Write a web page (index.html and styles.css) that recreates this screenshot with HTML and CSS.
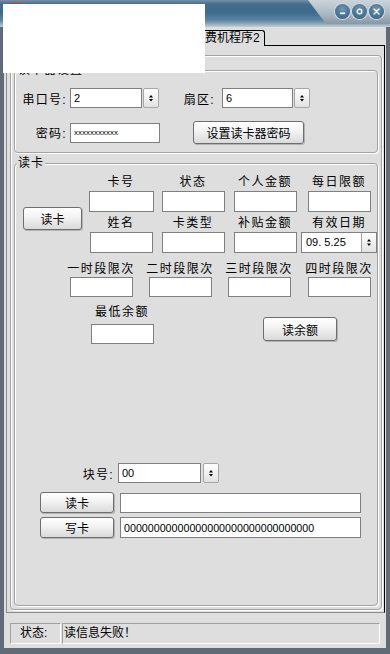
FILE: index.html
```html
<!DOCTYPE html>
<html lang="zh-CN">
<head>
    <meta charset="UTF-8">
    <meta name="viewport" content="width=device-width, initial-scale=1.0">
    <title>消费机程序</title>
    <link rel="stylesheet" href="styles.css">
</head>
<body>
    <div class="window">
        <!-- Title bar -->
        <div class="titlebar">
            <span class="app-icon"></span>
            <div class="title-buttons">
                <span class="tb-btn">
                    <svg width="15" height="15" viewBox="0 0 15 15"><rect x="5" y="8.5" width="5" height="1.6" fill="#fff"/></svg>
                </span>
                <span class="tb-btn">
                    <svg width="15" height="15" viewBox="0 0 15 15"><circle cx="7.5" cy="7.5" r="2.3" fill="none" stroke="#fff" stroke-width="1.3"/></svg>
                </span>
                <span class="tb-btn">
                    <svg width="15" height="15" viewBox="0 0 15 15"><path d="M5 5 L10 10 M10 5 L5 10" stroke="#fff" stroke-width="1.4" stroke-linecap="round"/></svg>
                </span>
            </div>
        </div>

        <div class="client">
            <!-- Tabs -->
            <div class="tabs">
                <div class="tab">消费机程序2</div>
            </div>

            <div class="tab-page">
                <div class="panel">
                    <!-- Reader settings -->
                    <div class="group group-reader">
                        <span class="group-title">读卡器设置</span>
                        <div class="reader-row">
                            <span class="field-label">串口号:</span>
                            <input type="text" class="input w-port" value="2">
                            <span class="spin">
                                <svg width="14" height="18" viewBox="0 0 14 18"><path d="M5 8.5 H9 L7 6Z M5 10 H9 L7 12.5Z" fill="#000"/></svg>
                            </span>
                            <span class="field-label label-sector">扇区:</span>
                            <input type="text" class="input w-sector" value="6">
                            <span class="spin">
                                <svg width="14" height="18" viewBox="0 0 14 18"><path d="M5 8.5 H9 L7 6Z M5 10 H9 L7 12.5Z" fill="#000"/></svg>
                            </span>
                        </div>
                        <div class="reader-row row-password">
                            <span class="field-label">密码:</span>
                            <input type="text" class="input w-password masked" value="xxxxxxxxxxx">
                            <button class="btn btn-setpwd">设置读卡器密码</button>
                        </div>
                    </div>

                    <!-- Card -->
                    <div class="group group-card">
                        <span class="group-title">读卡</span>

                        <div class="card-top">
                            <div class="card-left">
                                <button class="btn btn-read">读卡</button>
                            </div>
                            <div class="card-grid">
                                <div class="cell"><span class="cell-label">卡号</span><input type="text" class="input cell-input wide"></div>
                                <div class="cell"><span class="cell-label">状态</span><input type="text" class="input cell-input"></div>
                                <div class="cell"><span class="cell-label">个人金额</span><input type="text" class="input cell-input"></div>
                                <div class="cell"><span class="cell-label">每日限额</span><input type="text" class="input cell-input"></div>
                                <div class="cell"><span class="cell-label">姓名</span><input type="text" class="input cell-input"></div>
                                <div class="cell"><span class="cell-label">卡类型</span><input type="text" class="input cell-input"></div>
                                <div class="cell"><span class="cell-label">补贴金额</span><input type="text" class="input cell-input"></div>
                                <div class="cell">
                                    <span class="cell-label">有效日期</span>
                                    <div class="date-picker">
                                        <span class="date-value">09. 5.25</span>
                                        <span class="date-spin">
                                            <svg width="14" height="19" viewBox="0 0 14 19"><path d="M5 8.5 H9 L7 6Z M5 10.5 H9 L7 13Z" fill="#000"/></svg>
                                        </span>
                                    </div>
                                </div>
                            </div>
                        </div>

                        <div class="card-periods">
                            <div class="cell"><span class="cell-label">一时段限次</span><input type="text" class="input period-input"></div>
                            <div class="cell"><span class="cell-label">二时段限次</span><input type="text" class="input period-input"></div>
                            <div class="cell"><span class="cell-label">三时段限次</span><input type="text" class="input period-input"></div>
                            <div class="cell"><span class="cell-label">四时段限次</span><input type="text" class="input period-input"></div>
                        </div>

                        <div class="card-balance">
                            <div class="cell balance-cell"><span class="cell-label">最低余额</span><input type="text" class="input balance-input"></div>
                            <button class="btn btn-balance">读余额</button>
                        </div>

                        <div class="block-row">
                            <span class="field-label block-label">块号:</span>
                            <input type="text" class="input w-block" value="00">
                            <span class="spin spin-block">
                                <svg width="14" height="18" viewBox="0 0 14 18"><path d="M5 8.5 H9 L7 6Z M5 10 H9 L7 12.5Z" fill="#000"/></svg>
                            </span>
                        </div>
                        <div class="data-row">
                            <button class="btn btn-data">读卡</button>
                            <input type="text" class="input data-input">
                        </div>
                        <div class="data-row data-row-write">
                            <button class="btn btn-data">写卡</button>
                            <input type="text" class="input data-input" value="00000000000000000000000000000000">
                        </div>
                    </div>
                </div>
            </div>

            <!-- Status bar -->
            <div class="statusbar">
                <div class="status-cell status-label">状态:</div>
                <div class="status-cell status-msg">读信息失败！</div>
            </div>
        </div>

        <div class="redact"></div>
    </div>
</body>
</html>
```

FILE: styles.css
```css
* {
    margin: 0;
    padding: 0;
    box-sizing: border-box;
}

body {
    font-family: "Liberation Sans", "Noto Sans CJK SC", sans-serif;
    font-size: 12px;
    color: #000;
    background-color: #5f6b76;
}

.window {
    position: relative;
    width: 390px;
    height: 654px;
    display: flex;
    flex-direction: column;
    background-color: #5f6b76;
    overflow: hidden;
}

/* Title bar */
.titlebar {
    position: relative;
    height: 27px;
    display: flex;
    align-items: flex-start;
    background: linear-gradient(to bottom, #7890a4 0, #446e8e 4px, #3d6a8b 12px, #5883a2 20px, #93aabb 24px, #c3ced6 27px);
}

.titlebar::after {
    content: "";
    position: absolute;
    top: 0;
    right: 0;
    bottom: 3px;
    width: 82px;
    background: linear-gradient(to bottom, #ccd4da, #a9b7c2 60%, #8797a5);
    clip-path: polygon(0 0, 100% 0, 100% 100%, 18px 100%);
}

.app-icon {
    width: 12px;
    height: 12px;
    margin: 3px 0 0 10px;
    border-top: 1px solid #c0392b;
    background-color: #c8d4dc;
}

.title-buttons {
    position: relative;
    z-index: 1;
    margin-left: auto;
    display: flex;
    gap: 2px;
    padding: 4px 6px 0 0;
}

.tb-btn {
    width: 15px;
    height: 15px;
    border-radius: 50%;
    background: radial-gradient(circle at 50% 35%, #6f96b3, #2f5a7b);
    box-shadow: 0 0 0 1px #d3dbe1;
    display: flex;
}

/* Client area */
.client {
    flex: 1;
    margin: 0 4px 6px;
    padding-top: 3px;
    background-color: #dedede;
    display: flex;
    flex-direction: column;
}

.tabs {
    position: relative;
    z-index: 1;
    display: flex;
    height: 16px;
    padding-left: 184px;
}

.tab {
    height: 16px;
    padding: 0 4px;
    border: 1px solid #000;
    border-bottom: none;
    border-radius: 3px 3px 0 0;
    background-color: #dedede;
    line-height: 14px;
}

.tab-page {
    height: 568px;
    margin: -1px 1px 0 2px;
    padding: 9px 2px 2px 3px;
    border: 1px solid #000;
    border-left-color: #8c8c8c;
    border-bottom-color: #8c8c8c;
}

.panel {
    height: 555px;
    padding: 14px 3px 0;
    border: 1px solid #a3a3a3;
    border-radius: 4px;
    box-shadow: inset 1px 1px 0 #fff, 1px 1px 0 #fff;
}

.group {
    position: relative;
    border: 1px solid #a3a3a3;
    border-radius: 4px;
    box-shadow: inset 1px 1px 0 #fff, 1px 1px 0 #fff;
}

.group-title {
    position: absolute;
    top: -8px;
    left: 2px;
    padding: 0 1px;
    line-height: 14px;
    letter-spacing: 1px;
    background-color: #dedede;
}

/* Inputs and buttons */
.input {
    height: 20px;
    padding: 0 3px;
    border: 1px solid #808080;
    background-color: #fff;
    font-family: "Liberation Sans", "Noto Sans CJK SC", sans-serif;
    font-size: 11px;
    color: #000;
    outline: none;
}

.masked {
    font-size: 8px;
}

.spin {
    width: 16px;
    height: 20px;
    margin-left: 1px;
    border: 1px solid #a6a6a6;
    border-radius: 2px;
    background: linear-gradient(to bottom, #ffffff, #e2e2e2);
    display: flex;
}

.btn {
    font-family: "Liberation Sans", "Noto Sans CJK SC", sans-serif;
    font-size: 12px;
    color: #000;
    border: 1px solid #6e6e6e;
    border-radius: 3px;
    background: linear-gradient(to bottom, #ffffff 0%, #f2f2f2 45%, #dadada 100%);
    box-shadow: 1px 1px 0 #b3b3b3;
    cursor: pointer;
}

.field-label {
    width: 50px;
    padding-right: 3px;
    text-align: right;
    letter-spacing: 1.3px;
}

/* Reader settings */
.group-reader {
    height: 83px;
    padding: 17px 0 0 5px;
}

.reader-row {
    display: flex;
    align-items: center;
    height: 20px;
}

.w-port {
    width: 72px;
}

.label-sector {
    width: 47px;
    margin-left: 16px;
    padding-right: 7px;
}

.w-sector {
    width: 71px;
}

.row-password {
    height: 23px;
    margin-top: 13px;
}

.w-password {
    width: 90px;
}

.btn-setpwd {
    width: 111px;
    height: 23px;
    margin-left: 33px;
}

/* Card */
.group-card {
    height: 443px;
    margin-top: 10px;
    padding-top: 10px;
}

.card-top {
    display: flex;
}

.card-left {
    width: 71px;
    padding: 33px 0 0 8px;
}

.btn-read {
    width: 59px;
    height: 23px;
}

.card-grid {
    display: grid;
    grid-template-columns: 72px 72px 72px 76px;
    row-gap: 3px;
}

.cell {
    display: flex;
    flex-direction: column;
    align-items: center;
}

.cell-label {
    line-height: 16px;
    letter-spacing: 1.5px;
    white-space: nowrap;
}

.cell-input {
    width: 63px;
    height: 21px;
    margin-top: 1px;
}

.cell-input.wide {
    width: 65px;
}

.date-picker {
    width: 76px;
    height: 21px;
    margin-top: 1px;
    display: flex;
    border: 1px solid #808080;
    background-color: #fff;
}

.date-value {
    flex: 1;
    padding-left: 4px;
    line-height: 19px;
    font-size: 11px;
}

.date-spin {
    width: 15px;
    border-left: 1px solid #a6a6a6;
    background: linear-gradient(to bottom, #ffffff, #e2e2e2);
    display: flex;
}

.card-periods {
    display: grid;
    grid-template-columns: 80px 78px 80px 80px;
    margin: 8px 0 0 46px;
}

.period-input {
    width: 63px;
}

.card-balance {
    display: flex;
    align-items: flex-start;
    margin: 7px 0 0 71px;
}

.balance-cell {
    width: 72px;
}

.balance-input {
    width: 63px;
    margin-top: 4px;
}

.btn-balance {
    width: 74px;
    height: 24px;
    margin: 13px 0 0 105px;
}

.block-row {
    display: flex;
    align-items: center;
    height: 20px;
    margin-top: 119px;
}

.block-label {
    width: 103px;
    padding-right: 4px;
}

.w-block {
    width: 83px;
}

.spin-block {
    margin-left: 2px;
}

.data-row {
    display: flex;
    align-items: center;
    height: 21px;
    margin: 9px 0 0 25px;
}

.data-row-write {
    margin-top: 4px;
}

.btn-data {
    width: 74px;
    height: 21px;
}

.data-input {
    width: 241px;
    margin-left: 6px;
    font-size: 10.7px;
}

.data-row-write .data-input {
    height: 21px;
}

/* Status bar */
.statusbar {
    display: flex;
    gap: 1px;
    height: 21px;
    margin: 10px 6px 0;
}

.status-cell {
    border: 1px solid;
    border-color: #a0a0a0 #ffffff #ffffff #a0a0a0;
    line-height: 19px;
}

.status-label {
    width: 51px;
    padding-left: 9px;
}

.status-msg {
    flex: 1;
    padding-left: 1px;
}

/* White box over the caption */
.redact {
    position: absolute;
    left: 3px;
    top: 4px;
    width: 202px;
    height: 69px;
    background-color: #fff;
    z-index: 5;
}
```
